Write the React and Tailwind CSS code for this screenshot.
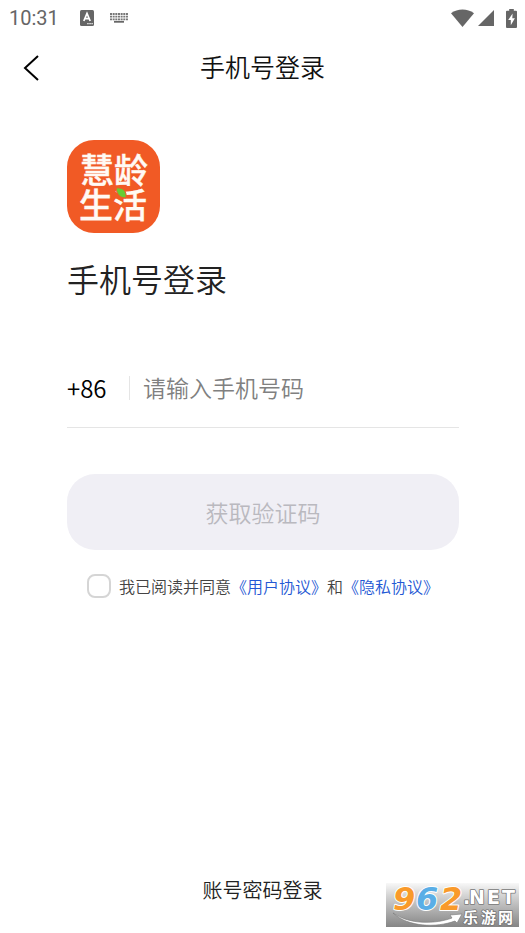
import React from "react";

function StatusBar() {
  return (
    <div className="flex h-9 items-center pl-[9px] pr-[8px] text-[#666]">
      <span className="font-[Roboto,sans-serif] text-xl font-normal leading-6">10:31</span>
      <svg className="ml-[21px] h-4 w-[14px]" viewBox="0 0 14 16" aria-hidden="true">
        <rect width="14" height="16" rx="1.5" fill="#666" />
        <path d="M3.8 11 7 3.5l3.2 7.5M5 8.6h4" fill="none" stroke="#fff" strokeWidth="1.7" />
        <path d="M7.3 13.7h5.4" stroke="#fff" strokeWidth="1.2" strokeDasharray="1.3 0.8" />
      </svg>
      <svg className="ml-4 h-[10px] w-[18px]" viewBox="0 0 18 10" aria-hidden="true">
        <path d="M0 1h18M0 3.7h18M0 6.4h18" stroke="#777" strokeWidth="1.8" strokeDasharray="2 0.66" />
        <path d="M4 8.8h10" stroke="#666" strokeWidth="1.8" />
      </svg>
      <div className="ml-auto flex items-center">
        <svg className="h-[18px] w-[23px]" viewBox="0 0 23 18" aria-hidden="true">
          <path d="M0 4.2C6.7-.6 16.3-.6 23 4.2L11.5 18Z" fill="#666" />
        </svg>
        <svg className="ml-1 h-4 w-4" viewBox="0 0 16 16" aria-hidden="true">
          <path d="M16 0v16H0Z" fill="#666" />
        </svg>
        <svg className="ml-3 h-[19px] w-[11px]" viewBox="0 0 11 19" aria-hidden="true">
          <path d="M3.2 0h4.6v1.8H10a1 1 0 0 1 1 1V18a1 1 0 0 1-1 1H1a1 1 0 0 1-1-1V2.800a1 1 0 0 1 1-1h2.200Z" fill="#666" />
          <path d="M6.600 4.500 2.200 11h2.600v5.200L8.900 9.300H6.300Z" fill="#fff" />
        </svg>
      </div>
    </div>
  );
}

function AppLogo() {
  return (
    <svg className="size-[93px]" viewBox="0 0 93 93" role="img" aria-label="慧龄生活">
      <rect width="93" height="93" rx="27" fill="#f15a25" />
      <g fill="#fffaf4" stroke="#fffaf4" strokeWidth="0.4" fontFamily="'Noto Sans CJK SC', sans-serif" fontWeight="500" fontSize="34">
        <text x="13" y="43">慧</text>
        <text x="47" y="43">龄</text>
        <text x="12" y="78">生</text>
        <text x="46" y="78">活</text>
      </g>
      <path d="M49 48c7-1 11 3 10 10-6 0-9-3-10-10Z" fill="#66cc33" stroke="#f15a25" strokeWidth="1" />
    </svg>
  );
}

function Watermark() {
  return (
    <svg className="pointer-events-none absolute bottom-[6px] right-[6px] h-[44px] w-[133px] overflow-visible" viewBox="0 0 133 44" role="img" aria-label="962.NET 乐游网">
      <defs>
        <linearGradient id="shade" x1="0" y1="0" x2="0" y2="1">
          <stop offset="0" stopColor="#f8f8f8" />
          <stop offset="0.3" stopColor="#d2d2d2" />
          <stop offset="1" stopColor="#858585" />
        </linearGradient>
      </defs>
      <rect width="133" height="44" fill="url(#shade)" />
      <g fontFamily="'DejaVu Sans', sans-serif" fontSize="32" fontWeight="700" fontStyle="oblique" stroke="#fff" strokeWidth="2" strokeLinejoin="round" paintOrder="stroke">
        <text x="7" y="27" fill="#f99a2b">9</text>
        <text x="30" y="27" fill="#5aaee6">6</text>
        <text x="54" y="27" fill="#f99a2b">2</text>
      </g>
      <path d="M7 30C24 42 50 41 66 35l-2-3 12-1-5 9-2-2C50 45 22 44 7 30Z" fill="#fff" stroke="#777" strokeWidth=".6" />
      <g fill="#fff" stroke="#777" strokeWidth="1.6" strokeLinejoin="round" paintOrder="stroke" fontWeight="700">
        <g fontFamily="'DejaVu Sans', sans-serif" fontSize="19">
          <text x="77" y="21">.</text>
          <text x="83" y="21">N</text>
          <text x="101" y="21">E</text>
          <text x="116" y="21">T</text>
        </g>
        <g fontFamily="'Noto Sans CJK SC', sans-serif" fontSize="15">
          <text x="77" y="40">乐</text>
          <text x="95" y="40">游</text>
          <text x="112" y="40">网</text>
        </g>
      </g>
    </svg>
  );
}

export default function App() {
  return (
    <div lang="zh-CN" className="relative flex min-h-screen flex-col bg-white font-['Noto_Sans_CJK_SC',sans-serif] font-[350] text-[#222]">
      <StatusBar />
      <header className="grid h-[60px] grid-cols-[64px_1fr_64px] items-center">
        <button type="button" aria-label="返回" className="flex h-full items-center pl-[23px] pt-1 text-black">
          <svg className="h-[26px] w-[16px]" viewBox="0 0 16 26" fill="none" stroke="currentColor" strokeWidth="2" aria-hidden="true">
            <path d="M15 1 2 13l13 12" />
          </svg>
        </button>
        <h1 className="text-center text-[25px] font-[350] leading-9 text-[#111]">手机号登录</h1>
      </header>

      <main className="pl-[67px] pr-[66px] pt-11">
        <AppLogo />
        <h2 className="mt-[21px] text-[32px] font-[350] leading-[48px]">手机号登录</h2>
        <form onSubmit={(e) => e.preventDefault()}>
          <div className="mt-[46px] flex h-20 items-center border-b border-[#e5e5e5]">
            <label htmlFor="phone" className="w-[62px] text-2xl leading-8 text-black">+86</label>
            <input
              id="phone"
              type="tel"
              placeholder="请输入手机号码"
              className="h-6 min-w-0 flex-1 border-l border-[#e5e5e5] bg-transparent pl-[13px] text-[23px] outline-none placeholder:text-[#808080]"
            />
          </div>
          <button type="submit" className="mt-[46px] h-[76px] w-full rounded-[28px] bg-[#f0eff5] text-[23px] text-[#bab9bf]">
            获取验证码
          </button>
          <div className="mt-6 flex items-center pl-5 whitespace-nowrap text-base leading-6 text-[#444]">
            <input
              id="agree"
              type="checkbox"
              className="mr-2 size-6 shrink-0 appearance-none rounded-lg border-2 border-[#d5d5d5] bg-white checked:bg-[#2459cf]"
            />
            <label htmlFor="agree">我已阅读并同意</label>
            <a href="#terms" className="text-[#2458d4]">《用户协议》</a>
            <span>和</span>
            <a href="#privacy" className="text-[#2458d4]">《隐私协议》</a>
          </div>
        </form>
      </main>

      <footer className="mt-auto flex justify-center pb-[27px]">
        <a href="#password" className="text-xl leading-8">账号密码登录</a>
      </footer>
      <Watermark />
    </div>
  );
}
